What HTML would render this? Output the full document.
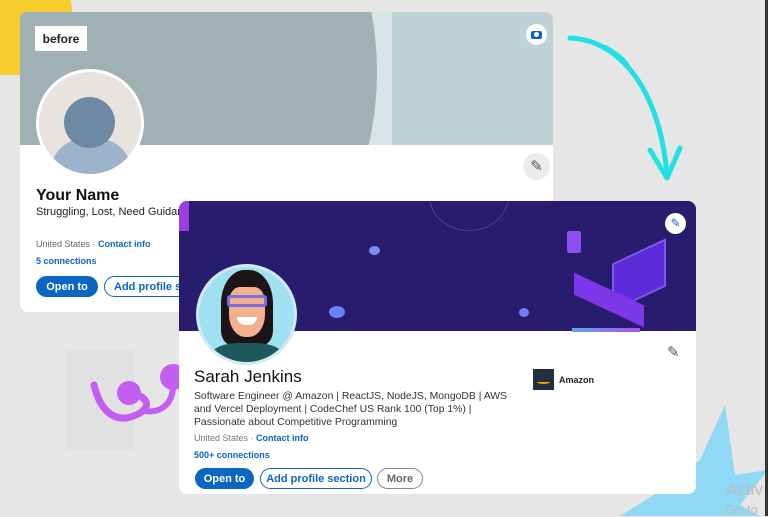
<!DOCTYPE html>
<html><head><meta charset="utf-8"><style>
*{margin:0;padding:0;box-sizing:border-box}
body{width:768px;height:516px;overflow:hidden;background:#e6e6e6;font-family:"Liberation Sans",sans-serif;position:relative}
.abs{position:absolute}
.card{position:absolute;background:#fff;overflow:hidden}
.btn{position:absolute;border-radius:12px;font-weight:bold;font-size:11px;display:flex;align-items:center;justify-content:center;white-space:nowrap;overflow:hidden}
</style></head><body>
<div class="abs" style="left:-10px;top:-20px;width:82px;height:95px;background:#f7cd2d;border-radius:0 30px 40px 0"></div>
<div class="abs" style="left:65px;top:350px;width:70px;height:100px;background:#e1e1e1;border-radius:4px"></div>
<svg class="abs" style="left:600px;top:400px" width="168" height="116"><polygon points="125,5 135,75 168,70 140,105 160,116 20,116 70,85 100,60" fill="#8fd8f6"/></svg>
<svg class="abs" style="left:85px;top:355px" width="100" height="80"><path d="M9,30 C15,55 30,72 55,58 C68,50 60,40 45,38" stroke="#c25ef2" stroke-width="7" fill="none" stroke-linecap="round"/><circle cx="44" cy="38" r="12" fill="#c25ef2"/><path d="M55,55 C72,60 90,52 88,25" stroke="#c25ef2" stroke-width="6" fill="none"/><circle cx="88" cy="22" r="13" fill="#c25ef2"/></svg>
<svg class="abs" style="left:560px;top:30px" width="150" height="160"><path d="M10,8 C60,10 100,60 107,145" stroke="#22e0e4" stroke-width="5" fill="none" stroke-linecap="round"/><path d="M90,120 L107,148 L120,118" stroke="#22e0e4" stroke-width="5" fill="none" stroke-linecap="round" stroke-linejoin="round"/><path d="M45,16 C60,25 65,30 68,35" stroke="#22e0e4" stroke-width="3" fill="none"/></svg>

<div class="card" style="left:20px;top:12px;width:533px;height:300px;border-radius:7px">
 <div class="abs" style="left:0;top:0;width:533px;height:133px;background:#bfd2d5"></div>
 <div class="abs" style="left:0;top:0;width:372px;height:133px;background:#d8e3e5"></div>
 <div class="abs" style="left:-403px;top:-290px;width:760px;height:700px;background:#9fb1b4;border-radius:50%"></div>
 <div class="abs" style="left:0;top:133px;width:533px;height:170px;background:#fff"></div>
 <div class="abs" style="left:15px;top:14px;width:52px;height:25px;background:#fff;font-weight:bold;font-size:12px;display:flex;align-items:center;justify-content:center;color:#222">before</div>
 <div class="abs" style="left:506px;top:12px;width:21px;height:21px;border-radius:50%;background:#fff"><div class="abs" style="left:5px;top:7px;width:11px;height:8px;background:#0a66c2;border-radius:2px"></div><div class="abs" style="left:8px;top:8px;width:5px;height:5px;background:#fff;border-radius:50%"></div></div>
 <div class="abs" style="left:16px;top:57px;width:108px;height:108px;border-radius:50%;background:#fff;padding:3px"><div style="width:102px;height:102px;border-radius:50%;background:#e8e3de;position:relative;overflow:hidden"><div class="abs" style="left:13px;top:65px;width:78px;height:60px;border-radius:50%;background:#9db3cc"></div><div class="abs" style="left:25px;top:25px;width:51px;height:51px;border-radius:50%;background:#6e89a3"></div></div></div>
 <div class="abs" style="left:503px;top:141px;width:27px;height:27px;border-radius:50%;background:#ebebeb;color:#555;font-size:15px;text-align:center;line-height:27px">✎</div>
 <div class="abs" style="left:16px;top:175px;font-size:16px;font-weight:bold;color:#111">Your Name</div>
 <div class="abs" style="left:16px;top:194px;font-size:11px;color:#222;white-space:nowrap">Struggling, Lost, Need Guidance</div>
 <div class="abs" style="left:16px;top:227px;font-size:9px;color:#666">United States · <b style="color:#0a66c2">Contact info</b></div>
 <div class="abs" style="left:16px;top:244px;font-size:9px;color:#0a66c2;font-weight:bold">5 connections</div>
 <div class="btn" style="left:16px;top:264px;width:62px;height:21px;background:#0a66c2;color:#fff">Open to</div>
 <div class="btn" style="left:84px;top:264px;width:110px;height:21px;border:1px solid #0a66c2;color:#0a66c2;justify-content:flex-start;padding-left:9px">Add profile section</div>
</div>

<div class="card" style="left:179px;top:201px;width:517px;height:293px;border-radius:8px">
 <div class="abs" style="left:0;top:0;width:517px;height:130px;background:#271c6e"></div>
 <div class="abs" style="left:0;top:0;width:10px;height:30px;background:#9a3ee0"></div>
 <div class="abs" style="left:250px;top:-40px;width:80px;height:70px;border-radius:50%;border:1px solid #4a3aa0"></div>
 <div class="abs" style="left:190px;top:45px;width:11px;height:9px;border-radius:50%;background:#7b8cf0"></div>
 <div class="abs" style="left:150px;top:105px;width:16px;height:12px;border-radius:50%;background:#6b7ef5"></div>
 <div class="abs" style="left:340px;top:107px;width:10px;height:9px;border-radius:50%;background:#6b7ef5"></div>
 <div class="abs" style="left:433px;top:50px;width:54px;height:48px;background:#5e2bd8;transform:skewY(-25deg);border:2px solid #7c5cf0"></div>
 <div class="abs" style="left:395px;top:88px;width:70px;height:22px;background:#7c38e8;transform:skewY(25deg)"></div>
 <div class="abs" style="left:388px;top:30px;width:14px;height:22px;background:#8a4ff0;border-radius:2px"></div>
 <div class="abs" style="left:393px;top:127px;width:68px;height:4px;background:linear-gradient(90deg,#5aa8f0,#b04ef0)"></div>
 <div class="abs" style="left:486px;top:12px;width:21px;height:21px;border-radius:50%;background:#fff;color:#0a66c2;font-size:12px;text-align:center;line-height:21px">✎</div>
 <div class="abs" style="left:17px;top:63px;width:101px;height:101px;border-radius:50%;background:#cfeaf5;padding:3px"><div style="width:95px;height:95px;border-radius:50%;background:#9fe0f1;position:relative;overflow:hidden">
  <div class="abs" style="left:22px;top:3px;width:52px;height:75px;background:#1d1418;border-radius:45% 45% 20% 20%"></div>
  <div class="abs" style="left:30px;top:20px;width:36px;height:50px;background:#f2b08e;border-radius:30% 30% 45% 45%"></div>
  <div class="abs" style="left:28px;top:28px;width:40px;height:12px;border:3px solid #7a6ee0;border-radius:3px"></div>
  <div class="abs" style="left:38px;top:50px;width:20px;height:8px;background:#fff;border-radius:0 0 10px 10px"></div>
  <div class="abs" style="left:12px;top:76px;width:72px;height:30px;background:#1e5a5c;border-radius:40% 40% 0 0"></div>
 </div></div>
 <div class="abs" style="left:488px;top:142px;color:#555;font-size:15px">✎</div>
 <div class="abs" style="left:15px;top:166px;font-size:17px;color:#111">Sarah Jenkins</div>
 <div class="abs" style="left:15px;top:189px;font-size:10.4px;color:#333;line-height:13px;width:330px">Software Engineer @ Amazon | ReactJS, NodeJS, MongoDB | AWS and Vercel Deployment | CodeChef US Rank 100 (Top 1%) | Passionate about Competitive Programming</div>
 <div class="abs" style="left:15px;top:232px;font-size:9px;color:#777">United States · <b style="color:#0a66c2">Contact info</b></div>
 <div class="abs" style="left:15px;top:249px;font-size:9px;color:#0a66c2;font-weight:bold">500+ connections</div>
 <div class="btn" style="left:16px;top:267px;width:59px;height:21px;background:#0a66c2;color:#fff">Open to</div>
 <div class="btn" style="left:81px;top:267px;width:112px;height:21px;border:1px solid #0a66c2;color:#0a66c2">Add profile section</div>
 <div class="btn" style="left:198px;top:267px;width:46px;height:21px;border:1px solid #888;color:#666">More</div>
 <div class="abs" style="left:354px;top:168px;width:21px;height:21px;background:#232f3e"><div class="abs" style="left:4px;top:11px;width:13px;height:4px;border-bottom:2px solid #f90;border-radius:0 0 50% 50%"></div></div>
 <div class="abs" style="left:380px;top:174px;font-size:9px;font-weight:bold;color:#222">Amazon</div>
</div>
<div class="abs" style="left:726px;top:480px;font-size:17px;color:#bdbdbd">Activ</div>
<div class="abs" style="left:726px;top:502px;font-size:13px;color:#bdbdbd">Go to</div>
<div class="abs" style="left:765px;top:0;width:3px;height:516px;background:#333"></div>
</body></html>
